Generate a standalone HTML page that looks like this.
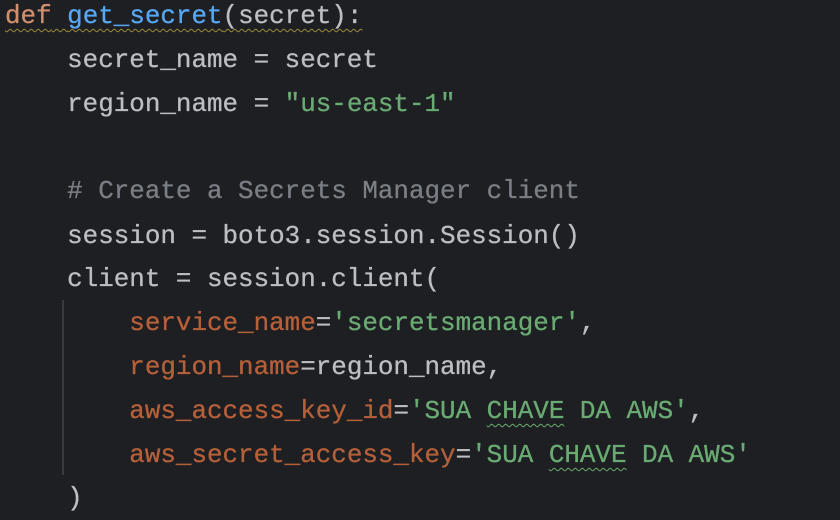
<!DOCTYPE html>
<html><head><meta charset="utf-8"><style>
html,body{margin:0;padding:0;background:#1e1f22;width:840px;height:520px;overflow:hidden}
.l{position:absolute;left:5px;height:44px;line-height:44px;font-family:"Liberation Mono",monospace;font-size:25.9px;color:#bcbec4;white-space:pre;-webkit-text-stroke:0.3px currentColor}
.k{color:#cf8e6d}.f{color:#56a8f5}.s{color:#6aab73}.c{color:#7a7e85}.p{color:#b6603a}
.w{text-decoration:underline wavy #9c8a3c;text-decoration-thickness:1.3px;text-underline-offset:5px}
.wg{text-decoration:underline wavy #6aab73;text-decoration-thickness:1.3px;text-underline-offset:5px}
.g{position:absolute;left:62px;top:300px;width:2px;height:175px;background:#393b40}
</style></head><body>
<div class="g"></div>
<div class="l" style="top:-6px"><span class="w"><span class="k">def</span> <span class="f">get_secret</span>(secret):</span></div>
<div class="l" style="top:38px">    secret_name = secret</div>
<div class="l" style="top:82px">    region_name = <span class="s">"us-east-1"</span></div>
<div class="l" style="top:169px">    <span class="c"># Create a Secrets Manager client</span></div>
<div class="l" style="top:214px">    session = boto3.session.Session()</div>
<div class="l" style="top:257px">    client = session.client(</div>
<div class="l" style="top:301px">        <span class="p">service_name</span>=<span class="s">'secretsmanager'</span>,</div>
<div class="l" style="top:345px">        <span class="p">region_name</span>=region_name,</div>
<div class="l" style="top:389px">        <span class="p">aws_access_key_id</span>=<span class="s">'SUA <span class="wg">CHAVE</span> DA AWS'</span>,</div>
<div class="l" style="top:433px">        <span class="p">aws_secret_access_key</span>=<span class="s">'SUA <span class="wg">CHAVE</span> DA AWS'</span></div>
<div class="l" style="top:476px">    )</div>
</body></html>
